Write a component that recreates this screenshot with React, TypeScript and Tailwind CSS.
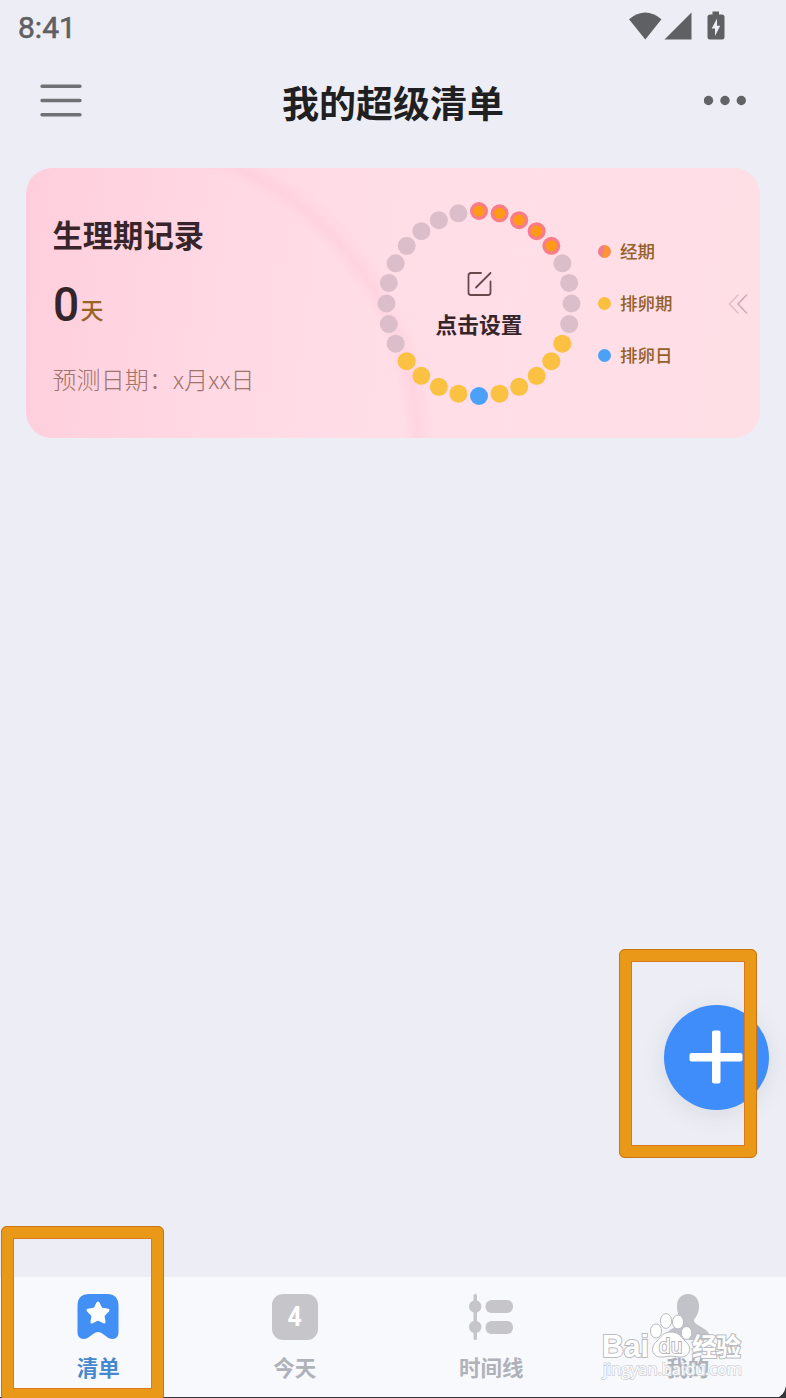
import React from 'react';

type Legend = { label: string; dot: string };

const legends: Legend[] = [
    { label: '经期', dot: 'bg-[linear-gradient(100deg,#f07c8c_35%,#ff9a24_55%,#f58a5c_100%)]' },
    { label: '排卵期', dot: 'bg-[#fabf3e]' },
    { label: '排卵日', dot: 'bg-[#4ba1f5]' },
];

const DAYS = 28;

const dayColor = (day: number) => {
    if (day < 5) return '#f97d88';
    if (day === 14) return '#4ba1f7';
    if (day >= 9 && day <= 18) return '#fac142';
    return '#dbbec9';
};

const StatusBar: React.FC = () => (
    <div className="flex h-[54px] items-center justify-between pl-[18px] pr-[60px] text-[#5f6063]">
        <span className="pt-px font-['Roboto',sans-serif] text-[30px] leading-none [-webkit-text-stroke:0.6px]">8:41</span>
        <svg className="h-8 w-[97px]" viewBox="0 0 97 32" fill="currentColor">
            <path d="M0 8.2Q16.300 -5 32.500 8.200L16.300 28.500Z" />
            <path d="M35.500 28.500H62.500V1.500Z" />
            <path fillRule="evenodd" d="M83.500 0.500H90V3.500H93Q95.500 3.500 95.500 6V26Q95.500 28.500 93 28.500H81Q78.500 28.500 78.500 26V6Q78.500 3.500 81 3.500H83.500ZM88 7.500L82.700 17.500H86V25L91.200 14.800H88Z" />
        </svg>
    </div>
);

const Header: React.FC = () => (
    <header className="flex h-[114px] items-start justify-between pl-10 pr-[39px] pt-[24px] text-[#707174]">
        <svg className="mt-[6px] h-[34px] w-[42px]" viewBox="0 0 42 34" stroke="currentColor" strokeWidth="3.400" strokeLinecap="round">
            <path d="M2 2.300H40M2 16.500H40M2 30.700H40" />
        </svg>
        <h1 className="text-[37px] font-bold leading-[48px] text-[#202023]">我的超级清单</h1>
        <svg className="mt-[17px] h-[11px] w-[43px]" viewBox="0 0 43 11" fill="#626366">
            <circle cx="4.500" cy="5.500" r="4.700" />
            <circle cx="21" cy="5.500" r="4.700" />
            <circle cx="37.300" cy="5.500" r="4.700" />
        </svg>
    </header>
);

const CycleRing: React.FC = () => (
    <div className="relative flex h-[206px] w-[206px] flex-col items-center pt-[70px]">
        <svg className="absolute inset-0" viewBox="-103 -103.500 206 206">
            {Array.from({ length: DAYS }, (_, day) => {
                const angle = (day / DAYS) * Math.PI * 2;
                const x = Math.sin(angle) * 92.5;
                const y = -Math.cos(angle) * 92.5;
                return (
                    <g key={day}>
                        <circle cx={x} cy={y} r="9" fill={dayColor(day)} />
                        {day < 5 && <circle cx={x} cy={y} r="5.600" fill="#ff9a17" />}
                    </g>
                );
            })}
        </svg>
        <svg className="h-[27px] w-[27px]" viewBox="0 0 27 27" fill="none" stroke="#69474b" strokeWidth="1.800" strokeLinecap="round" strokeLinejoin="round">
            <path d="M15 3H5Q2.500 3 2.500 5.500V22.500Q2.500 25 5 25H22Q24.500 25 24.500 22.500V11.500" />
            <path d="M10 17.500L24.500 3" />
        </svg>
        <span className="mt-[11px] text-[21.700px] font-bold leading-8 text-[#35242a]">点击设置</span>
    </div>
);

const PeriodCard: React.FC = () => (
    <section className="relative mx-[26px] flex h-[270px] overflow-hidden rounded-[26px] bg-[linear-gradient(97deg,#ffcedc_0%,#ffd9e4_28%,#ffdee8_50%,#ffdfe6_100%)]">
        <svg className="absolute inset-0 h-full w-full" viewBox="0 0 734 270">
            <defs>
                <radialGradient id="halo" gradientUnits="userSpaceOnUse" cx="85" cy="280" r="328">
                    <stop offset="0.895" stopColor="#ffc6d6" stopOpacity="0" />
                    <stop offset="0.935" stopColor="#ffc6d6" stopOpacity="0.400" />
                    <stop offset="0.985" stopColor="#ffc6d6" stopOpacity="0" />
                </radialGradient>
            </defs>
            <circle cx="85" cy="280" r="328" fill="url(#halo)" />
        </svg>
        <div className="relative w-[350px] pl-[26.500px] pt-[42px]">
            <h2 className="text-[30.300px] font-bold leading-[48px] text-[#38252b]">生理期记录</h2>
            <div className="mt-[19px] flex h-[56px] items-baseline">
                <span className="w-[28px] origin-left scale-x-[0.940] font-['Roboto',sans-serif] text-[49px] font-medium leading-[56px] text-[#35252b]">0</span>
                <span className="relative -top-[2px] text-[23px] font-medium leading-none text-[#98651f]">天</span>
            </div>
            <p className="mt-[30px] text-[24px] font-light leading-8 tracking-[0.100px] text-[#a0736b]">预测日期：x月xx日</p>
        </div>
        <div className="relative pt-[32px]">
            <CycleRing />
        </div>
        <ul className="relative ml-[16px] flex flex-col gap-[20px] pt-[67px]">
            {legends.map((item) => (
                <li key={item.label} className="flex h-8 items-center gap-[9px]">
                    <span className={`h-[13px] w-[13px] rounded-full ${item.dot}`} />
                    <span className="text-[17.500px] font-medium text-[#94612c]">{item.label}</span>
                </li>
            ))}
        </ul>
        <svg className="relative ml-auto mr-[12px] mt-[126px] h-5 w-5" viewBox="0 0 20 20" fill="none" strokeWidth="1.500" strokeLinecap="round">
            <path d="M10 1L1.500 10L10 19" stroke="#e1bfc8" />
            <path d="M18.500 1L10 10L18.500 19" stroke="#cda9b3" />
        </svg>
    </section>
);

const ListIcon: React.FC = () => (
    <svg className="h-[46px] w-[42px]" viewBox="0 0 42 46">
        <path fill="#428ff6" d="M12 0H30Q41.500 0 41.500 12V38Q41.500 45 35.500 45Q32 45 28 41.500L24 38.800Q21 37 18 38.800L14 41.500Q10 45 6.500 45Q0.500 45 0.500 38V12Q0.500 0 12 0Z" />
        <path fill="white" stroke="white" strokeWidth="3" strokeLinejoin="round" d="M21 9L24 15L31 16.200L26 21.500L27 28L21 25L15 28L16 21.500L11 16.200L18 15Z" />
    </svg>
);

const TodayIcon: React.FC = () => (
    <span className="flex h-[46px] w-[46px] items-center justify-center rounded-[11px] bg-[#c6c6ca] text-white">
        <span className="scale-x-[0.920] font-['Roboto',sans-serif] text-[27px] font-bold leading-none">4</span>
    </span>
);

const TimelineIcon: React.FC = () => (
    <svg className="h-[46px] w-[44px]" viewBox="0 0 44 46" fill="#c6c6ca">
        <rect x="4.500" width="3.500" height="46" rx="1.500" />
        <circle cx="6.200" cy="12.500" r="6.200" />
        <circle cx="6.200" cy="33" r="6.200" />
        <rect x="16.500" y="6" width="27.500" height="13" rx="6" />
        <rect x="16.500" y="27" width="27.500" height="13" rx="6" />
    </svg>
);

const ProfileIcon: React.FC = () => (
    <svg className="h-[46px] w-[44px]" viewBox="0 0 44 46" fill="#c2c3c8">
        <path d="M22 0C29 0 33 5 33 12C33 19 30 23 28 26Q28 29 32 31L40 36Q44 39 44 46H0Q0 39 4 36L12 31Q16 29 16 26C13 23 11 19 11 12C11 5 15 0 22 0Z" />
    </svg>
);

const tabs = [
    { label: '清单', icon: ListIcon, color: 'text-[#4689cf]' },
    { label: '今天', icon: TodayIcon, color: 'text-[#afb2b8]' },
    { label: '时间线', icon: TimelineIcon, color: 'text-[#afb2b8]' },
    { label: '我的', icon: ProfileIcon, color: 'text-[#afb2b8]' },
];

const TabBar: React.FC = () => (
    <nav className="grid h-[121px] grid-cols-4 border-b border-[#333538] bg-[#f8f9fd] pt-[17px]">
        {tabs.map(({ label, icon: Icon, color }) => (
            <div key={label} className="flex flex-col items-center">
                <Icon />
                <span className={`mt-[11px] text-[21.500px] font-bold leading-8 ${color}`}>{label}</span>
            </div>
        ))}
    </nav>
);

const Watermark: React.FC = () => (
    <svg className="absolute bottom-[10px] left-[598px] h-[80px] w-[150px]" viewBox="598 1308 150 80" fill="white" stroke="#b9babf" strokeWidth="1" fontFamily="Liberation Sans, Noto Sans CJK SC, sans-serif">
        <g paintOrder="stroke" strokeWidth="2" fontWeight="700">
            <text x="602" y="1357" fontSize="32" textLength="47" lengthAdjust="spacingAndGlyphs">Bai</text>
            <text x="692" y="1356" fontSize="25" textLength="49">经验</text>
        </g>
        <path d="M671 1332C679 1332 681 1337 685 1341C694 1348 689 1358 679 1357Q671 1355 663 1357C652 1358 649 1348 657 1341C661 1337 663 1332 671 1332Z" />
        <ellipse cx="656" cy="1331" rx="5.600" ry="7" />
        <ellipse cx="666" cy="1321" rx="5.600" ry="7.400" />
        <ellipse cx="678" cy="1322" rx="5.600" ry="7" />
        <ellipse cx="686.500" cy="1333" rx="5.300" ry="6.500" />
        <text x="659" y="1353" fontSize="20" textLength="23" stroke="#b6b7bc" strokeWidth="2" paintOrder="stroke">du</text>
        <text x="603" y="1375" fontSize="17" textLength="139" lengthAdjust="spacingAndGlyphs" fontFamily="Open Sans, sans-serif" paintOrder="stroke" stroke="#cfd0d5" strokeWidth="1.600">jingyan.baidu.com</text>
    </svg>
);

// orange marker box, bevelled along both edges
const Marker: React.FC<{ className: string }> = ({ className }) => (
    <div className={`absolute rounded-[6px] border-[13px] border-[#ea9818] outline-1 -outline-offset-1 outline-[#c97512] ${className}`}>
        <div className="h-full w-full outline-1 outline-[#d97920]" />
    </div>
);

const App: React.FC = () => (
    <div className="relative flex h-[1398px] w-[786px] flex-col overflow-hidden bg-[#edeef5] font-['Noto_Sans_CJK_SC',sans-serif]">
        <StatusBar />
        <Header />
        <PeriodCard />
        <main className="flex-1" />
        <TabBar />
        <button className="absolute left-[664px] top-[1005px] flex h-[105px] w-[105px] items-center justify-center rounded-full bg-[#3e8dfb] shadow-[0_4px_24px_rgba(60,70,90,0.12)]">
            <svg className="mb-px mr-px h-[54px] w-[54px]" viewBox="0 0 54 54" fill="white">
                <rect x="23" y="0.500" width="8.500" height="53" rx="2" />
                <rect x="0.500" y="23" width="53" height="8.500" rx="2" />
            </svg>
        </button>
        <Marker className="left-[619px] top-[949px] h-[209px] w-[138px]" />
        <Marker className="left-[1px] top-[1226px] h-[175px] w-[163px]" />
        <Watermark />
        <svg className="absolute bottom-0 right-0 h-3 w-3" viewBox="0 0 12 12" fill="#333538">
            <path d="M12 0V12H2Q10 10 12 0Z" />
        </svg>
    </div>
);

export default App;
